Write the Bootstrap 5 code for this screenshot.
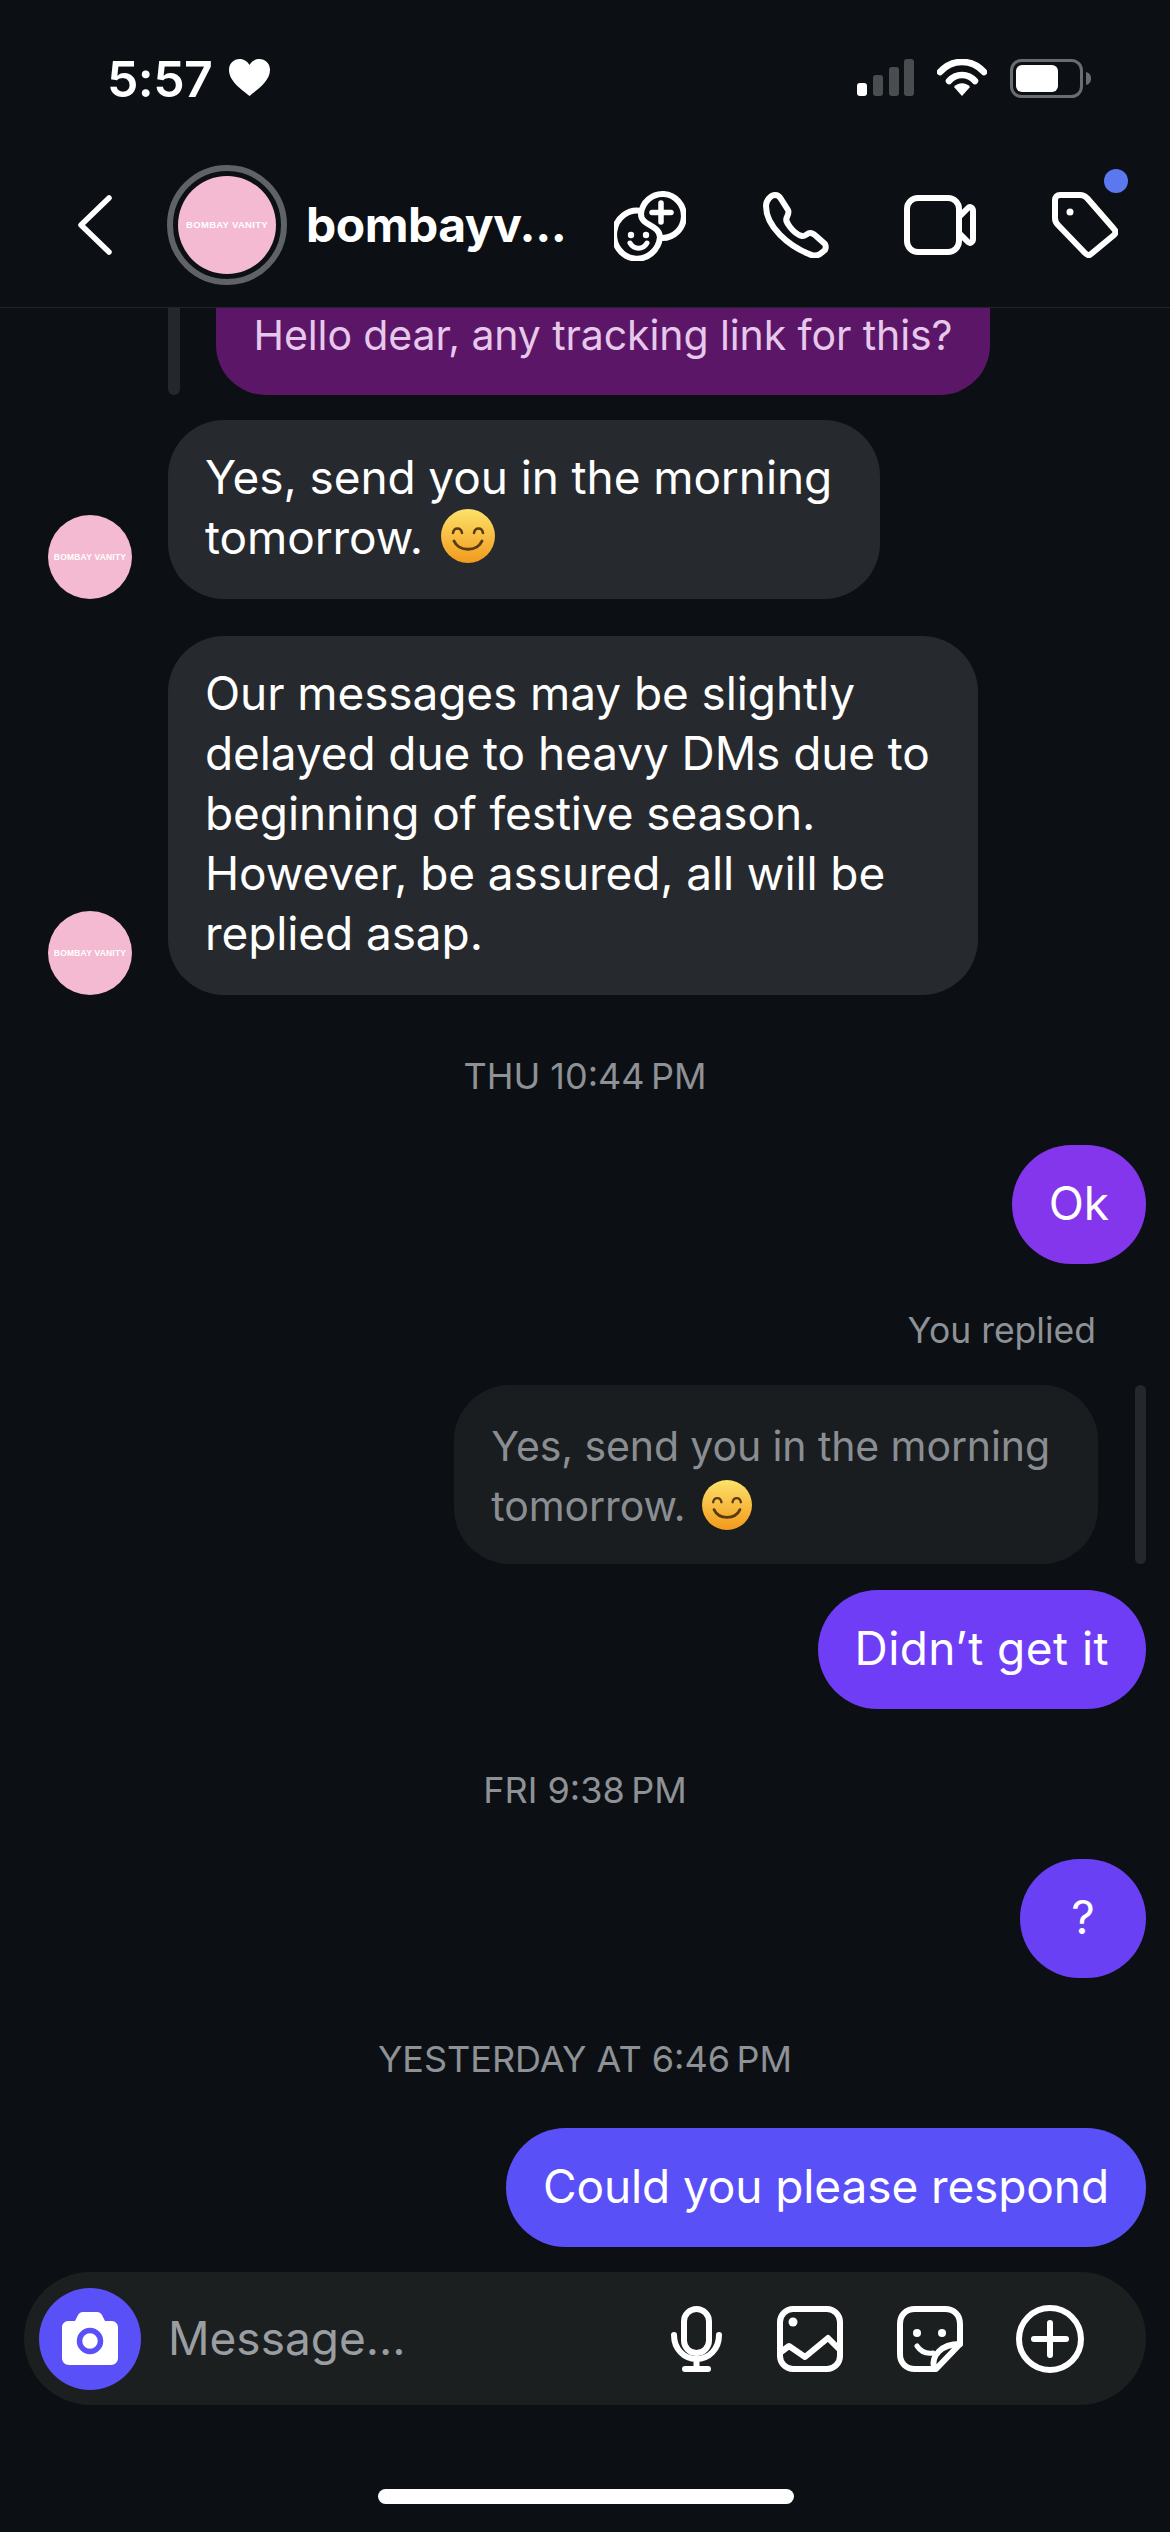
<!DOCTYPE html>
<html lang="en">
<head>
  <meta charset="UTF-8">
  <meta name="viewport" content="width=device-width, initial-scale=1.0">
  <title>Direct message</title>
  <link href="https://cdn.jsdelivr.net/npm/bootstrap@5.3.0/dist/css/bootstrap.min.css" rel="stylesheet">
  <style>
    body {
      background-color: #0c1014;
      font-family: 'Inter', 'Liberation Sans', sans-serif;
      color: #fff;
    }

    .phone {
      width: 1170px;
      height: 2532px;
      overflow: hidden;
    }

    /* Status bar */
    .status-row {
      height: 160px;
      padding: 59px 78px 0 107px;
    }
    .clock {
      font-size: 50px;
      line-height: 40px;
      font-weight: 600;
      width: 122px;
      letter-spacing: -.6px;
    }
    .status-gap { margin-left: auto; }
    .wifi-icon { margin-left: 23px; }
    .batt-icon { margin-left: 23px; }

    /* Header */
    .top-bar {
      height: 148px;
      padding: 0 42px 17px 78px;
      border-bottom: 1px solid #22262a;
      position: relative;
    }
    .story-ring {
      width: 120px;
      height: 120px;
      margin-left: 55px;
      border: 6px solid #5f6368;
      padding: 5px;
    }
    .logo-disc {
      background-color: #f4bad2;
      color: #fff;
      font-family: 'Liberation Sans', sans-serif;
      font-weight: 700;
      white-space: nowrap;
      width: 100%;
      height: 100%;
    }
    .logo-big { font-size: 9.500px; letter-spacing: .3px; }
    .logo-small { font-size: 8.500px; letter-spacing: .2px; }
    .peer-name {
      font-size: 48px;
      font-weight: 700;
      width: 256px;
      margin-left: 19px;
      letter-spacing: -.5px;
      white-space: nowrap;
    }
    .ic-effects { margin-left: 52px; }
    .ic-call { margin-left: 77px; }
    .ic-video { margin-left: 75px; }
    .ic-tag { margin-left: 76px; }
    .unread-dot {
      position: absolute;
      width: 24px;
      height: 24px;
      left: 1104px;
      top: 9px;
      background-color: #5b78f0;
    }

    /* Thread */
    .thread {
      height: 1940px;
      padding-right: 24px;
      font-size: 46px;
      line-height: 60px;
      letter-spacing: -.1px;
    }
    .quote-row { height: 87px; padding-left: 168px; }
    .quote-bar {
      width: 12px;
      background-color: #24282c;
      border-radius: 0 0 6px 6px;
    }
    .quote-bubble {
      width: 774px;
      margin-left: 36px;
      background-color: #5c1668;
      color: #e6c8ea;
      font-size: 41px;
      line-height: 54px;
      border-radius: 0 0 50px 50px;
      text-align: center;
    }
    .in-row { padding-left: 48px; }
    .avatar-small { width: 84px; height: 84px; flex: none; }
    .in-bubble {
      margin-left: 36px;
      padding: 26.500px 48px 32.500px 37px;
      background-color: #262a2e;
      border-radius: 56px;
    }
    .gap-25 { margin-top: 25px; }
    .gap-26 { margin-top: 26px; }
    .gap-37 { margin-top: 37px; }
    .gap-46 { margin-top: 46px; }
    .gap-35 { margin-top: 35px; }
    .gap-49 { margin-top: 49px; }
    .gap-61 { margin-top: 61px; }

    .stamp {
      color: #8e9296;
      font-size: 36px;
      line-height: 40px;
      text-align: center;
      letter-spacing: 0;
      margin-right: -24px;
    }
    .replied-label {
      color: #8e9296;
      font-size: 35.500px;
      line-height: 42px;
      height: 40px;
      text-align: right;
      padding-right: 50px;
      letter-spacing: 0;
    }
    .reply-wrap { gap: 37px; }
    .reply-bubble {
      padding: 30.500px 48px 28.500px 37px;
      background-color: #1a1d20;
      color: #8a8e92;
      font-size: 41px;
      border-radius: 56px;
    }
    .reply-bar {
      width: 11px;
      background-color: #24282c;
      border-radius: 6px;
    }
    .out-bubble {
      height: 119px;
      min-width: 126px;
      padding: 0 37px;
      line-height: 116px;
      text-align: center;
    }
    .tint-1 { background-color: #8436ec; }
    .tint-2 { background-color: #6e3df5; letter-spacing: .45px; }
    .tint-3 { background-color: #6a40f5; }
    .tint-4 { background-color: #5a50f8; }
    .smile { vertical-align: -9px; margin-left: 5px; }

    /* Composer */
    .composer {
      width: 1122px;
      height: 133px;
      margin: 24px 0 0 24px;
      background-color: #1c1f1f;
      padding-left: 15px;
    }
    .cam-btn {
      width: 102px;
      height: 102px;
      background-color: #5a50f8;
      flex: none;
    }
    .composer-hint {
      color: #9a9ea2;
      font-size: 46px;
      margin-left: 27px;
      width: 503px;
    }
    .ic-gallery { margin-left: 55px; }
    .ic-sticker { margin-left: 54px; }
    .ic-plus { margin-left: 53px; }

    .home-bar {
      width: 416px;
      height: 15px;
      margin: 84px 0 0 378px;
      background-color: #fff;
    }
  </style>
</head>
<body>
  <div class="phone d-flex flex-column">

    <div class="status-row d-flex align-items-start">
      <span class="clock">5:57</span>
      <svg width="41" height="37" viewBox="0 0 41 37"><path d="M20.5 37C15 32 0 23 0 11 0 4 5 0 10.500 0 15 0 18.500 2.500 20.500 6 22.500 2.500 26 0 30.500 0 36 0 41 4 41 11 41 23 26 32 20.500 37Z" fill="#fff"/></svg>
      <svg class="status-gap" width="57" height="37" viewBox="0 0 57 37">
        <rect x="0" y="24" width="10" height="13" rx="3" fill="#fff"/>
        <rect x="16" y="16" width="10" height="21" rx="3" fill="#4a4d50"/>
        <rect x="32" y="8" width="10" height="29" rx="3" fill="#4a4d50"/>
        <rect x="47" y="0" width="10" height="37" rx="3" fill="#4a4d50"/>
      </svg>
      <svg class="wifi-icon" width="50" height="37" viewBox="0 0 50 37">
        <path d="M3 13C15-.5 35-.5 47 13" fill="none" stroke="#fff" stroke-width="6.500" stroke-linecap="round"/>
        <path d="M12 22C19 14 31 14 38 22" fill="none" stroke="#fff" stroke-width="6.500" stroke-linecap="round"/>
        <path d="M17 28C21 23 29 23 33 28L25 37Z" fill="#fff"/>
      </svg>
      <svg class="batt-icon" width="82" height="39" viewBox="0 0 82 39">
        <rect x="1.500" y="1.500" width="70" height="36" rx="10" fill="none" stroke="#6a6d70" stroke-width="3"/>
        <rect x="6" y="6" width="42" height="27" rx="6" fill="#fff"/>
        <path d="M76 13C80 14 81 17 81 19.500 81 22 80 25 76 26Z" fill="#6a6d70"/>
      </svg>
    </div>

    <div class="top-bar d-flex align-items-center">
      <svg width="34" height="60" viewBox="0 0 34 60"><path d="M31 3 3 30 31 57" fill="none" stroke="#fff" stroke-width="5.500" stroke-linecap="round" stroke-linejoin="round"/></svg>
      <div class="story-ring rounded-circle">
        <div class="logo-disc logo-big rounded-circle d-flex align-items-center justify-content-center">BOMBAY VANITY</div>
      </div>
      <div class="peer-name">bombayv...</div>
      <svg class="ic-effects" width="72" height="72" viewBox="0 0 72 72" fill="none" stroke="#fff" stroke-width="6" stroke-linecap="round">
        <path d="M48 49A21.500 22 0 1 0 27 25C27 37 45 35 46 48"/>
        <path d="M27 22A23 24 0 1 0 46 48"/>
        <path d="M47 14V33M38 23.500H57" stroke-width="5.500"/>
        <path d="M16 54C20 61 29 61 33 54" stroke-width="5"/>
        <circle cx="17" cy="46" r="3.200" fill="#fff" stroke="none"/>
        <circle cx="32" cy="46" r="3.200" fill="#fff" stroke="none"/>
      </svg>
      <svg class="ic-call" width="66" height="66" viewBox="0 0 66 66" fill="none" stroke="#fff" stroke-width="6" stroke-linejoin="round">
        <path d="M3 14C3 8 8 3 12 3 15 3 17 5 18 7L25 18C26 20 25 23 24 25 22 28 24 31 27 35 30 39 35 43 39 44 42 45 44 41 47 41 49 41 51 42 53 44L62 52C63 54 63 56 62 58L57 62C54 64 50 64 46 62 26 54 3 35 3 14Z"/>
      </svg>
      <svg class="ic-video" width="72" height="60" viewBox="0 0 72 60" fill="none" stroke="#fff" stroke-width="6" stroke-linejoin="round">
        <rect x="3" y="3" width="52" height="54" rx="11"/>
        <path d="M55 22 64 13C66 11 69 13 69 16V44C69 47 66 49 64 47L55 38"/>
      </svg>
      <svg class="ic-tag" width="66" height="66" viewBox="0 0 66 66" fill="none" stroke="#fff" stroke-width="6" stroke-linejoin="round">
        <path d="M3 8C3 5 5 3 8 3H28C31 3 33 4 35 6L62 37C64 39 64 41 62 43L39 62C37 64 35 63 33 61L6 33C4 31 3 29 3 26Z"/>
        <circle cx="18" cy="20" r="3.500" fill="#fff" stroke="none"/>
      </svg>
      <span class="unread-dot rounded-circle"></span>
    </div>

    <div class="thread d-flex flex-column">
      <div class="quote-row d-flex">
        <div class="quote-bar"></div>
        <div class="quote-bubble">Hello dear, any tracking link for this?</div>
      </div>

      <div class="in-row gap-25 d-flex align-items-end">
        <div class="avatar-small logo-disc logo-small rounded-circle d-flex align-items-center justify-content-center">BOMBAY VANITY</div>
        <div class="in-bubble">Yes, send you in the morning<br>tomorrow. <svg class="smile" width="54" height="54" viewBox="0 0 54 54"><defs><linearGradient id="face1" x1="0" y1="0" x2="0" y2="1"><stop offset="0" stop-color="#fde26a"/><stop offset="1" stop-color="#f29a1c"/></linearGradient></defs><circle cx="27" cy="27" r="27" fill="url(#face1)"/><path d="M12 24C13 18 20 18 21 24M33 24C34 18 41 18 42 24" fill="none" stroke="#5b3a12" stroke-width="2.500" stroke-linecap="round"/><path d="M13 32C18 43 36 43 41 32" fill="none" stroke="#5b3a12" stroke-width="3" stroke-linecap="round"/></svg></div>
      </div>

      <div class="in-row gap-37 d-flex align-items-end">
        <div class="avatar-small logo-disc logo-small rounded-circle d-flex align-items-center justify-content-center">BOMBAY VANITY</div>
        <div class="in-bubble">Our messages may be slightly<br>delayed due to heavy DMs due to<br>beginning of festive season.<br>However, be assured, all will be<br>replied asap.</div>
      </div>

      <div class="stamp gap-61">THU 10:44&#8239;PM</div>

      <div class="gap-49 d-flex justify-content-end">
        <div class="out-bubble tint-1 rounded-pill">Ok</div>
      </div>

      <div class="replied-label gap-46">You replied</div>

      <div class="reply-wrap gap-35 d-flex justify-content-end">
        <div class="reply-bubble">Yes, send you in the morning<br>tomorrow. <svg class="smile" width="50" height="50" viewBox="0 0 54 54"><defs><linearGradient id="face2" x1="0" y1="0" x2="0" y2="1"><stop offset="0" stop-color="#fde26a"/><stop offset="1" stop-color="#f29a1c"/></linearGradient></defs><circle cx="27" cy="27" r="27" fill="url(#face2)"/><path d="M12 24C13 18 20 18 21 24M33 24C34 18 41 18 42 24" fill="none" stroke="#5b3a12" stroke-width="2.500" stroke-linecap="round"/><path d="M13 32C18 43 36 43 41 32" fill="none" stroke="#5b3a12" stroke-width="3" stroke-linecap="round"/></svg></div>
        <div class="reply-bar"></div>
      </div>

      <div class="gap-26 d-flex justify-content-end">
        <div class="out-bubble tint-2 rounded-pill">Didn’t get it</div>
      </div>

      <div class="stamp gap-61">FRI 9:38&#8239;PM</div>

      <div class="gap-49 d-flex justify-content-end">
        <div class="out-bubble tint-3 rounded-pill">?</div>
      </div>

      <div class="stamp gap-61">YESTERDAY AT 6:46&#8239;PM</div>

      <div class="gap-49 d-flex justify-content-end">
        <div class="out-bubble tint-4 rounded-pill">Could you please respond</div>
      </div>
    </div>

    <div class="composer rounded-pill d-flex align-items-center">
      <div class="cam-btn rounded-circle d-flex align-items-center justify-content-center">
        <svg width="56" height="53" viewBox="0 0 56 53"><path d="M6 9H13L16 3C17 1 19 0 21 0H35C37 0 39 1 40 3L43 9H50C53 9 56 12 56 15V46C56 50 53 53 49 53H7C3 53 0 50 0 46V15C0 12 3 9 6 9Z" fill="#fff"/><circle cx="28" cy="29" r="10.500" fill="none" stroke="#5a50f8" stroke-width="5.500"/></svg>
      </div>
      <div class="composer-hint">Message...</div>
      <svg width="51" height="66" viewBox="0 0 51 66" fill="none" stroke="#fff" stroke-width="6" stroke-linecap="round">
        <rect x="13" y="3" width="25" height="44" rx="12.500"/>
        <path d="M3 29C3 43 13 53 25.500 53S48 43 48 29M25.500 53V63M14 63H37"/>
      </svg>
      <svg class="ic-gallery" width="66" height="66" viewBox="0 0 66 66" fill="none" stroke="#fff" stroke-width="6" stroke-linejoin="round">
        <rect x="3" y="3" width="60" height="60" rx="13"/>
        <path d="M4 46 12 40 28 51 51 32 63 44"/>
        <circle cx="16" cy="16" r="4.500" fill="#fff" stroke="none"/>
      </svg>
      <svg class="ic-sticker" width="66" height="66" viewBox="0 0 66 66" fill="none" stroke="#fff" stroke-width="6" stroke-linejoin="round" stroke-linecap="round">
        <path d="M39 63H18C9 63 3 57 3 48V18C3 9 9 3 18 3H48C57 3 63 9 63 18V38Z"/>
        <path d="M37 62C34 50 44 38 63 38"/>
        <path d="M20 40C24 46 30 48 36 47" stroke-width="5"/>
        <circle cx="20" cy="27" r="4" fill="#fff" stroke="none"/>
        <circle cx="45" cy="27" r="4" fill="#fff" stroke="none"/>
      </svg>
      <svg class="ic-plus" width="68" height="68" viewBox="0 0 68 68" fill="none" stroke="#fff" stroke-width="6" stroke-linecap="round">
        <circle cx="34" cy="34" r="31"/>
        <path d="M34 18V50M18 34H50"/>
      </svg>
    </div>

    <div class="home-bar rounded-pill"></div>
  </div>

  <script src="https://cdn.jsdelivr.net/npm/bootstrap@5.3.0/dist/js/bootstrap.bundle.min.js"></script>
</body>
</html>
